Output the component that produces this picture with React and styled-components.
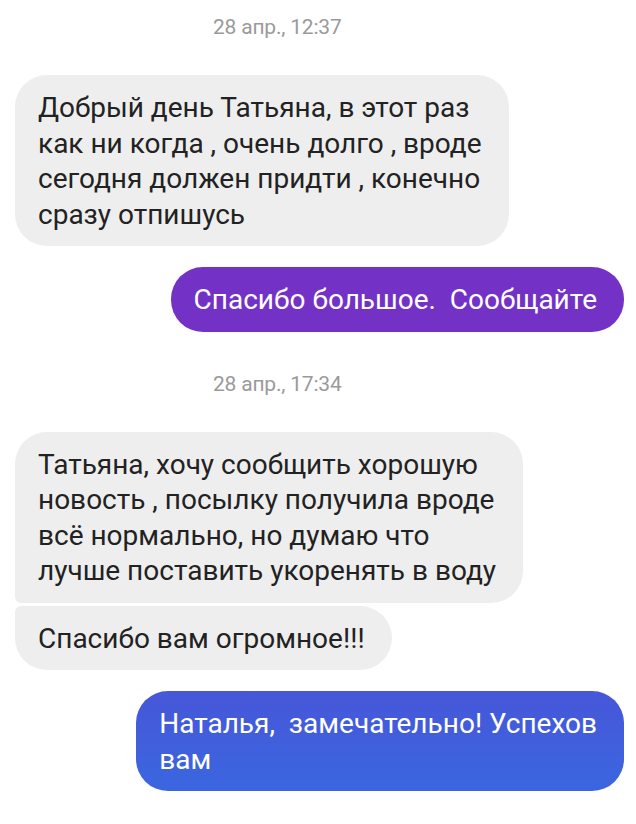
import React from 'react';
import styled, {createGlobalStyle, css} from 'styled-components';

const GlobalStyle = createGlobalStyle`
  body {
    margin: 0;
    background: #fff;
    font-family: Roboto, "Noto Sans", sans-serif;
  }
`;

const Thread = styled.div`
  display: flex;
  flex-direction: column;
  padding: 16px 12px 30px 15px;
`;

const Stamp = styled.div`
  padding-left: 198px;
  font-size: 21px;
  line-height: 22px;
  letter-spacing: -0.2px;
  color: #9a9a9a;
  margin-top: ${p => p.$top || 0}px;
  margin-bottom: 37px;
`;

const Row = styled.div`
  display: flex;
  justify-content: ${p => (p.$out ? 'flex-end' : 'flex-start')};
  margin-bottom: ${p => p.$gap ?? 21}px;
`;

const Bubble = styled.div`
  max-width: 520px;
  padding: 15px 27px 14px 23px;
  font-size: 28px;
  line-height: 35.5px;
  border-radius: 32px;
  white-space: pre-wrap;
  ${p =>
    p.$out
      ? css`
          color: #fff;
          background: ${p.$bg};
        `
      : css`
          color: #222;
          background: #eeeeee;
        `}
  ${p => p.$tail === 'bottom' && css`border-bottom-left-radius: 6px;`}
  ${p => p.$tail === 'top' && css`border-top-left-radius: 6px;`}
`;

function App() {
  return (
    <>
      <GlobalStyle />
      <Thread>
        <Stamp>28 апр., 12:37</Stamp>
        <Row>
          <Bubble>
            {'Добрый день Татьяна, в этот раз\nкак ни когда , очень долго , вроде\nсегодня должен придти , конечно\nсразу отпишусь'}
          </Bubble>
        </Row>
        <Row $out $gap={0}>
          <Bubble $out $bg="#7431c6">Спасибо большое.  Сообщайте</Bubble>
        </Row>
        <Stamp $top={41}>28 апр., 17:34</Stamp>
        <Row $gap={3}>
          <Bubble $tail="bottom">
            {'Татьяна, хочу сообщить хорошую\nновость , посылку получила вроде\nвсё нормально, но думаю что\nлучше поставить укоренять в воду'}
          </Bubble>
        </Row>
        <Row>
          <Bubble $tail="top">Спасибо вам огромное!!!</Bubble>
        </Row>
        <Row $out>
          <Bubble $out $bg="linear-gradient(180deg, #4657d8 0%, #3b66e0 100%)">
            {'Наталья,  замечательно! Успехов\nвам'}
          </Bubble>
        </Row>
      </Thread>
    </>
  );
}

export default App;
